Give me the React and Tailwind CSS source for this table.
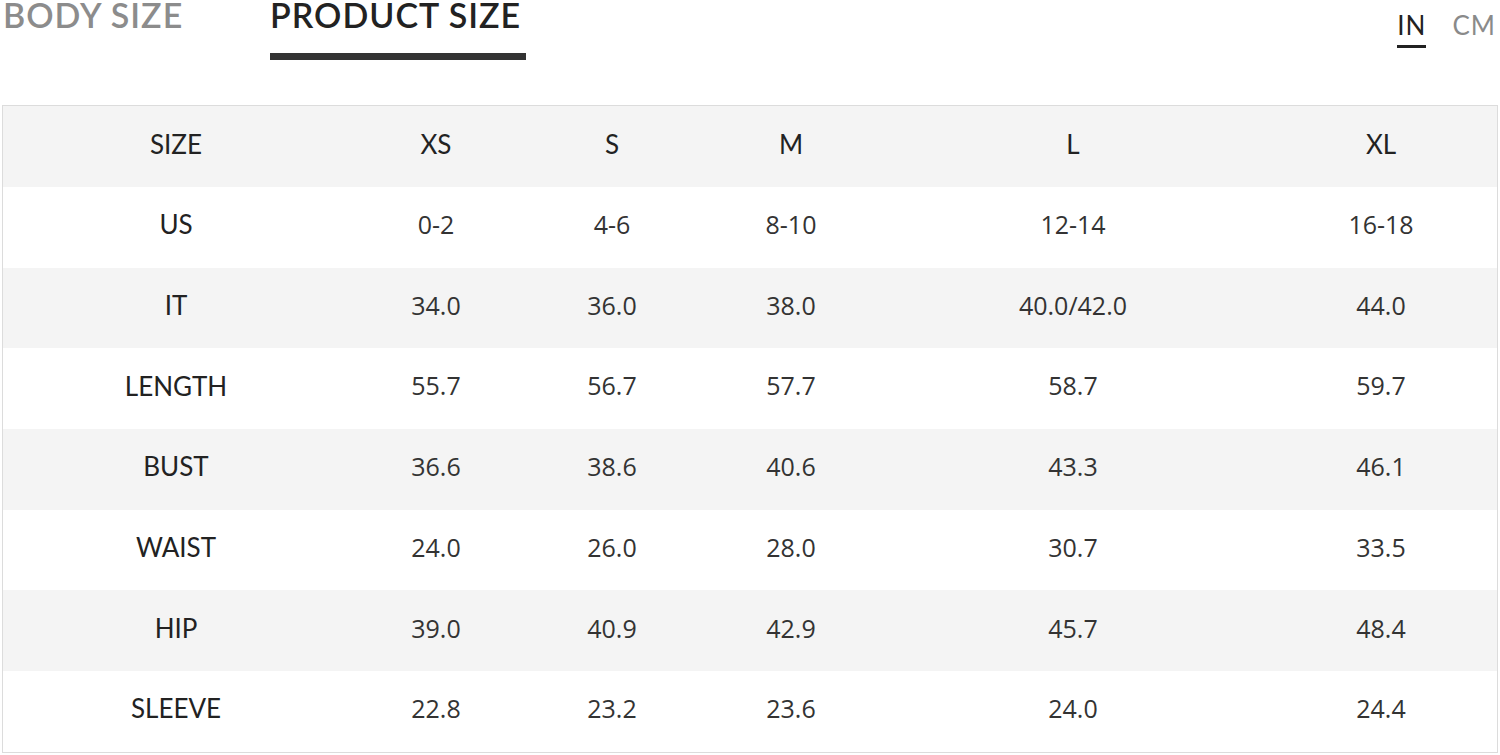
const cols = ["SIZE", "XS", "S", "M", "L", "XL"];

const rows = [
  ["US", "0-2", "4-6", "8-10", "12-14", "16-18"],
  ["IT", "34.0", "36.0", "38.0", "40.0/42.0", "44.0"],
  ["LENGTH", "55.7", "56.7", "57.7", "58.7", "59.7"],
  ["BUST", "36.6", "38.6", "40.6", "43.3", "46.1"],
  ["WAIST", "24.0", "26.0", "28.0", "30.7", "33.5"],
  ["HIP", "39.0", "40.9", "42.9", "45.7", "48.4"],
  ["SLEEVE", "22.8", "23.2", "23.6", "24.0", "24.4"],
];

const grid = "grid grid-cols-[346px_174px_178px_180px_384px_1fr] items-center pb-[5px]";

export default function App() {
  return (
    <div className="w-[1500px] h-[755px] bg-white overflow-hidden font-['Lato',sans-serif] text-[#222]">
      {/* Tabs */}
      <div className="flex items-start h-[105px]">
        <div className="flex items-start">
          <div className="ml-[3px] w-[267px] text-[34px] tracking-[1px] text-[#8c8c8c] font-semibold leading-[30px]">
            BODY SIZE
          </div>
          <div className="flex flex-col">
            <span className="text-[34px] tracking-[1px] text-[#222] font-semibold leading-[30px]">
              PRODUCT SIZE
            </span>
            <span className="mt-[23px] h-[7px] w-[256px] bg-[#333]" />
          </div>
        </div>
        <div className="ml-auto mr-[4px] mt-[10px] flex gap-[26px] text-[26px] tracking-[1px] leading-[30px]">
          <div className="flex flex-col">
            <span className="text-[#222]">IN</span>
            <span className="mt-[5px] h-[3px] bg-[#222]" />
          </div>
          <span className="text-[#8a8a8a]">CM</span>
        </div>
      </div>

      {/* Table */}
      <div className="mx-[2px] w-[1496px] border border-[#dcdcdc]">
        <div className={`${grid} h-[81px] bg-[#f4f4f4] text-[26px]`}>
          {cols.map((c) => (
            <div key={c} className="text-center">
              {c}
            </div>
          ))}
        </div>
        {rows.map((r, i) => (
          <div
            key={r[0]}
            className={`${grid} h-[80.7px] ${i % 2 === 1 ? "bg-[#f4f4f4]" : "bg-white"}`}
          >
            <div className="text-center text-[26px]">{r[0]}</div>
            {r.slice(1).map((v, j) => (
              <div
                key={j}
                className="text-center text-[25px] text-[#333] font-['Open_Sans',sans-serif]"
              >
                {v}
              </div>
            ))}
          </div>
        ))}
      </div>
    </div>
  );
}
